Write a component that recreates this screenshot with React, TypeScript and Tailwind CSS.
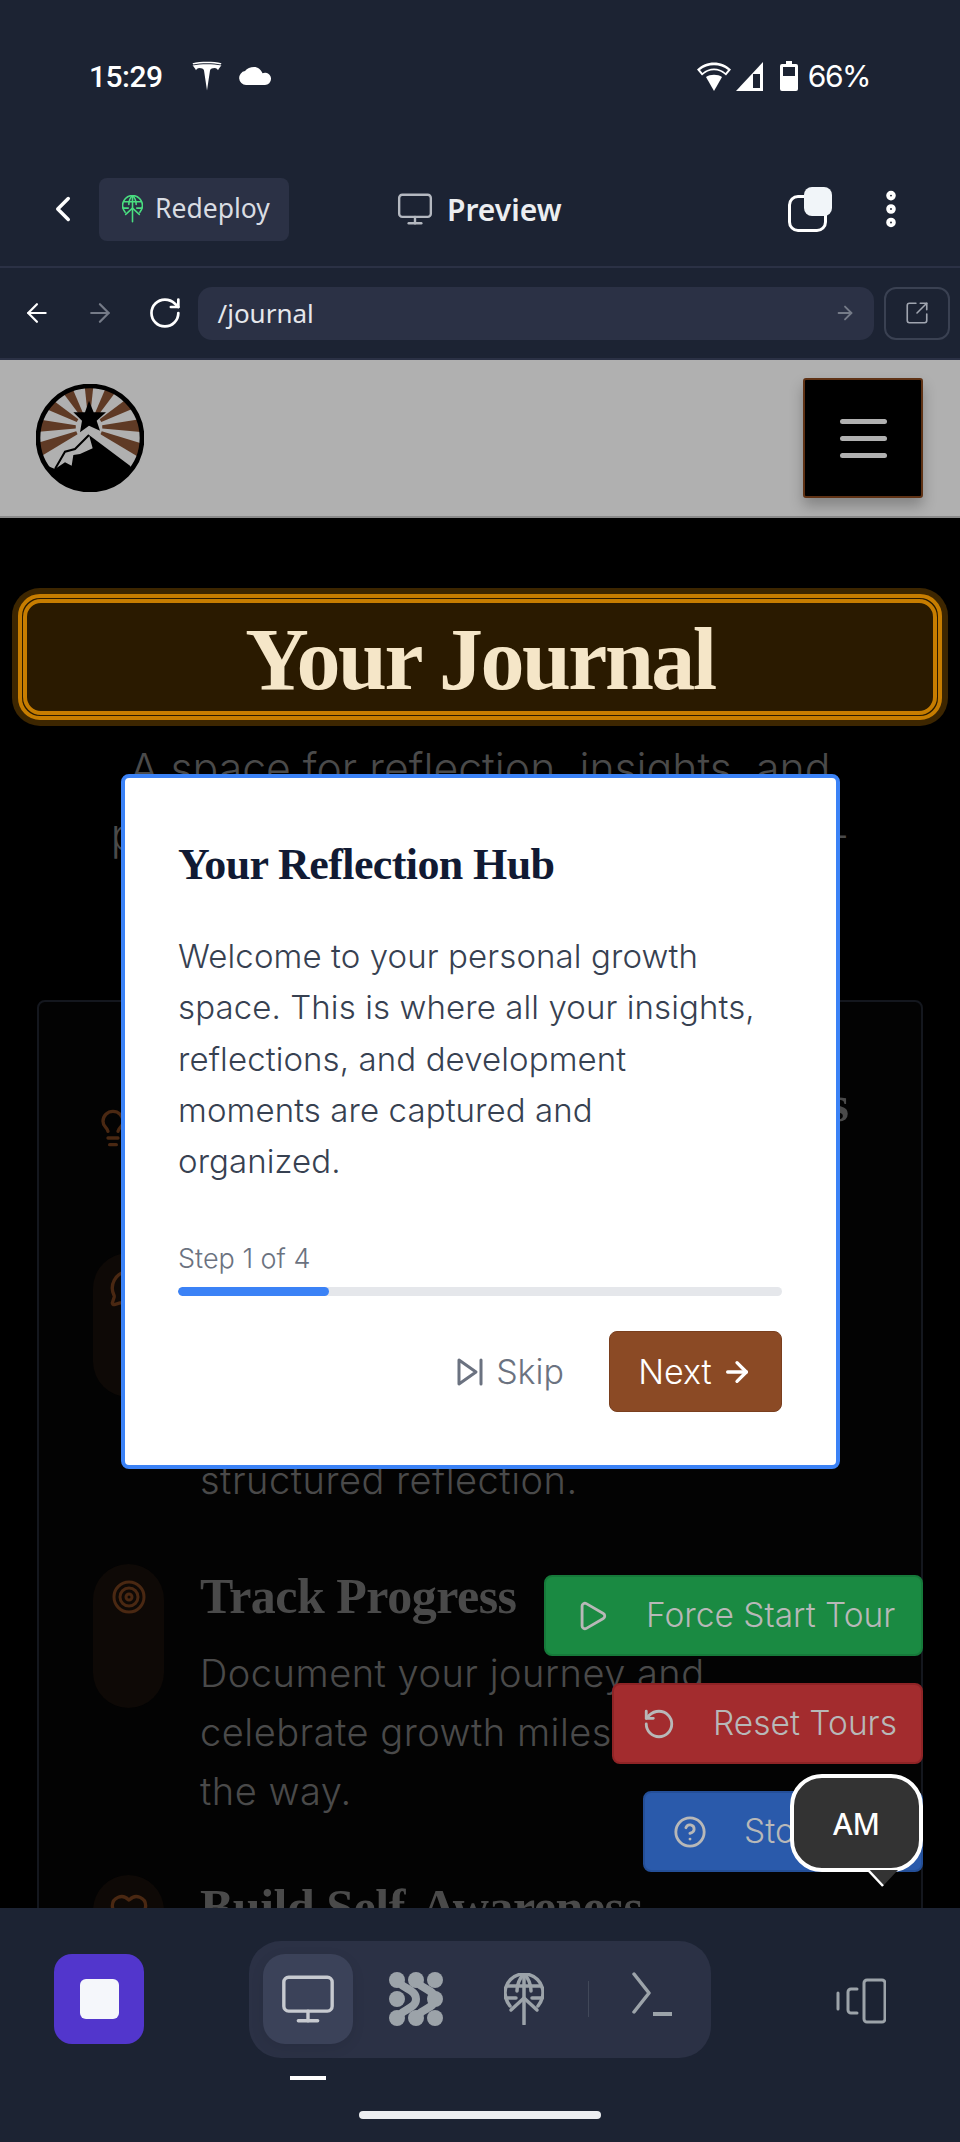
import {
  ArrowLeft,
  ArrowRight,
  ChevronLeft,
  CircleHelp,
  EllipsisVertical,
  Heart,
  Lightbulb,
  MessageCircle,
  Monitor,
  Play,
  RotateCcw,
  RotateCw,
  SquareArrowOutUpRight,
  Target,
} from "lucide-react";

const serif = "font-['Liberation_Serif',serif]";
const body = "font-['Inter',sans-serif]";

function TeslaLogo() {
  return (
    <svg width="30" height="30" viewBox="0 0 30 30" fill="white">
      <path d="M15 29.5 12 9.5c-.2-1.4-1.2-2-3-2.3l-1.5-.2c-2 .3-3 1-3.5 2.2C3 7 1.500 5.500.5 4.500 9 2.700 21 2.700 29.500 4.500 28.500 5.500 27 7 26 9.200c-.5-1.200-1.500-1.900-3.500-2.200L21 7.200c-1.800.3-2.800.9-3 2.300z" />
      <path d="M.5 2.200C9 .3 21 .3 29.500 2.200l-.8 1.200C21 1.800 9 1.800 1.300 3.400z" />
    </svg>
  );
}

function GlobeUp({ size, color, strokeWidth }: { size: number; color: string; strokeWidth: number }) {
  return (
    <svg width={size} height={size * 1.3} viewBox="0 0 40 52" fill="none" stroke={color} strokeWidth={strokeWidth} strokeLinecap="round" strokeLinejoin="round">
      <path d="M6 33C3 29 1 25 1 20 1 9.500 9.500 1 20 1s19 8.500 19 19c0 5-2 9-5 13" />
      <path d="M13 18C13 11 16 5 20 1c4 4 7 10 7 17" />
      <path d="M20 1v50M3 13h34M2 25h10M28 25h10" />
      <path d="M7 37 20 25l13 12" />
    </svg>
  );
}

function NetworkIcon() {
  return (
    <svg width="54" height="54" viewBox="0 0 54 54" fill="#9ca3a9" stroke="#9ca3a9" strokeLinecap="round">
      <circle cx="8" cy="8" r="8" stroke="none" />
      <circle cx="27" cy="8" r="8" stroke="none" />
      <circle cx="46" cy="8" r="8" stroke="none" />
      <circle cx="8" cy="27" r="8" stroke="none" />
      <circle cx="46" cy="27" r="8" stroke="none" />
      <circle cx="8" cy="46" r="8" stroke="none" />
      <circle cx="27" cy="46" r="8" stroke="none" />
      <circle cx="46" cy="46" r="8" stroke="none" />
      <path d="M8 8c5 9 19 9 19 19S13 37 8 46" fill="none" strokeWidth="8" />
      <path d="M27 8c3 9 19 9 19 19S30 37 27 46" fill="none" strokeWidth="8" />
    </svg>
  );
}

function TerminalIcon() {
  return (
    <svg width="42" height="46" viewBox="0 0 42 46" fill="none" stroke="#9ca3a9" strokeWidth="3.500" strokeLinecap="round" strokeLinejoin="round">
      <path d="M2 2l15 19-15 19" />
      <path d="M21 42h19" strokeLinecap="butt" strokeWidth="4" />
    </svg>
  );
}

function DeviceIcon() {
  return (
    <svg width="50" height="46" viewBox="0 0 50 46" fill="none" stroke="#9ca3a9" strokeWidth="3" strokeLinecap="round" strokeLinejoin="round">
      <rect x="28" y="2" width="21" height="42" rx="3" />
      <path d="M21 11h-6a3 3 0 0 0-3 3v18a3 3 0 0 0 3 3h6" />
      <path d="M2 15v16" />
    </svg>
  );
}

function Logo() {
  const cx = 207;
  const cy = 175;
  const rays = [90, 60, 30, 2, -24, 120, 150, 178, 204];
  return (
    <svg width="108" height="108" viewBox="48 45 324 324">
      <defs>
        <clipPath id="logo-clip">
          <circle cx="210" cy="207" r="152" />
        </clipPath>
      </defs>
      <circle cx="210" cy="207" r="152" fill="#b0b0b0" />
      <g clipPath="url(#logo-clip)">
        {rays.map((a) => {
          const w = a === 90 ? 6 : 7;
          const rad = (deg: number) => (deg * Math.PI) / 180;
          const x1 = cx + 40 * Math.cos(rad(a - w));
          const y1 = cy - 40 * Math.sin(rad(a - w));
          const x2 = cx + 40 * Math.cos(rad(a + w));
          const y2 = cy - 40 * Math.sin(rad(a + w));
          const x3 = cx + 260 * Math.cos(rad(a + w));
          const y3 = cy - 260 * Math.sin(rad(a + w));
          const x4 = cx + 260 * Math.cos(rad(a - w));
          const y4 = cy - 260 * Math.sin(rad(a - w));
          return <polygon key={a} points={`${x1},${y1} ${x2},${y2} ${x3},${y3} ${x4},${y4}`} fill="#5f3a25" />;
        })}
        <polygon points="207,170 178,192 88,292 105,300 330,290 240,195" fill="#b0b0b0" />
        <polygon points="207,198 330,290 372,369 48,369 85,292 105,300 135,280 155,290 160,258 180,255 218,238" fill="#000" />
        <path d="M207 198 165 240 135 248 105 300" fill="none" stroke="#000" strokeWidth="6" />
      </g>
      <polygon points="207,95 221,130 258,130 230,155 240,185 207,170 180,190 186,155 160,130 195,130" fill="#000" />
      <circle cx="210" cy="207" r="156" fill="none" stroke="#000" strokeWidth="14" />
    </svg>
  );
}

function JournalItem({ icon, title, lines }: { icon: React.ReactNode; title: string; lines: string[] }) {
  return (
    <div className="flex gap-[36px] items-start">
      <div className="w-[71px] h-[144px] shrink-0 rounded-full bg-[#0e0906] flex justify-center pt-[15px] text-[#4a2812]">{icon}</div>
      <div>
        <h3 className={`${serif} h-[72px] leading-[64px] text-[#4a4a4a] text-[50px] font-bold whitespace-nowrap tracking-[-0.5px]`}>{title}</h3>
        <p className={`${body} mt-[8px] text-[38px] leading-[59px] tracking-[0.5px] font-light text-[#4a4a4a] whitespace-nowrap`}>
          {lines.map((line) => (
            <span key={line} className="block">{line}</span>
          ))}
        </p>
      </div>
    </div>
  );
}

function FloatButton({ icon, label, className }: { icon: React.ReactNode; label: string; className: string }) {
  return (
    <div className={`${className} h-[81px] rounded-[8px] border-2 flex items-center gap-[37px] text-[#b8b8b8]`}>
      {icon}
      <span className={`${body} text-[33.500px] font-light whitespace-nowrap`}>{label}</span>
    </div>
  );
}

export default function App() {
  const intro = [
    "Welcome to your personal growth",
    "space. This is where all your insights,",
    "reflections, and development",
    "moments are captured and",
    "organized.",
  ];

  return (
    <div className="relative w-[960px] h-[2142px] overflow-hidden bg-[#1c2333] flex flex-col text-white">
      {/* status bar */}
      <div className="h-[152px] shrink-0 flex items-center pl-[89px] pr-[90px]">
        <span className="font-['Roboto',sans-serif] text-[30px] font-medium tracking-[-0.5px]">15:29</span>
        <div className="ml-[29px]"><TeslaLogo /></div>
        <svg className="ml-[17px]" width="32" height="18" viewBox="0 0 32 18" fill="white">
          <path d="M7 18a7 7 0 0 1-1-13.900C8 1.500 11.500 0 15 0c4 0 7 2.500 8.500 6.300A6 6 0 0 1 32 12a6 6 0 0 1-6 6z" />
        </svg>
        <div className="flex-1" />
        <svg width="34" height="29" viewBox="0 0 34 29" fill="white">
          <path d="M17 29 9 15c4-3 12-3 16 0z" />
          <path d="M0 7.500C9-2 25-2 34 7.500l-5 6C22 6.500 12 6.500 5 13.500z" fillRule="evenodd" />
          <path d="M3 8C10 1.500 24 1.500 31 8l-2.500 3C22 5 12 5 5.500 11z" fill="#1c2333" />
        </svg>
        <svg className="ml-[5px]" width="27" height="29" viewBox="0 0 27 29">
          <path d="M27 0v29H0z" fill="white" />
          <path d="M17 12h7v14h-7z" fill="#1c2333" />
        </svg>
        <svg className="ml-[17px]" width="18" height="30" viewBox="0 0 18 30">
          <path d="M6 0h6v3h4a2 2 0 0 1 2 2v23a2 2 0 0 1-2 2H2a2 2 0 0 1-2-2V5a2 2 0 0 1 2-2h4z" fill="white" />
          <rect x="3" y="6" width="12" height="9" fill="#1c2333" />
        </svg>
        <span className="ml-[10px] font-['Inter',sans-serif] text-[30px] leading-none tracking-[-1.500px]">66%</span>
      </div>

      {/* builder toolbar */}
      <div className="h-[116px] shrink-0 flex items-center border-b-2 border-[#2b3145] relative">
        <ChevronLeft className="ml-[42px]" size={42} strokeWidth={2} />
        <div className="ml-[15px] h-[63px] w-[190px] rounded-[8px] bg-[#2b3145] flex items-center pl-[23px]">
          <GlobeUp size={21} color="#4ade80" strokeWidth={3} />
          <span className="ml-[12px] font-['Noto_Sans',sans-serif] text-[26.500px] text-[#d9dce2]">Redeploy</span>
        </div>
        <Monitor className="ml-[107px] text-[#b4b8c0]" size={38} strokeWidth={1.500} />
        <span className="ml-[13px] font-['Noto_Sans',sans-serif] text-[30px] font-semibold text-[#eceef1]">Preview</span>
        <div className="flex-1" />
        <div className="relative w-[44px] h-[45px] mr-[36px]">
          <div className="absolute left-0 bottom-0 w-[39px] h-[37px] rounded-[10px] border-[3px] border-white" />
          <div className="absolute right-0 top-0 w-[28px] h-[29px] rounded-[8px] bg-[#f1f5f9]" />
        </div>
        <EllipsisVertical className="mr-[46px]" size={46} strokeWidth={3} />
      </div>

      {/* address bar */}
      <div className="h-[92px] shrink-0 flex items-center border-b-2 border-[#2b3145] pl-[22px] pr-[10px]">
        <ArrowLeft size={30} strokeWidth={1.800} />
        <ArrowRight className="ml-[33px] text-[#757b88]" size={30} strokeWidth={1.800} />
        <RotateCw className="ml-[32px]" size={36} strokeWidth={1.800} />
        <div className="ml-[15px] w-[680px] h-[53px] rounded-[14px] bg-[#2b3145] flex items-center justify-between pl-[20px] pr-[18px]">
          <span className="font-['Noto_Sans',sans-serif] text-[26px] text-[#e5e7eb]">/journal</span>
          <ArrowRight className="text-[#757b88]" size={22} strokeWidth={2} />
        </div>
        <div className="ml-[10px] w-[66px] h-[53px] rounded-[12px] border-2 border-[#3a4152] flex items-center justify-center">
          <SquareArrowOutUpRight className="text-[#a0a5b0]" size={26} strokeWidth={1.500} />
        </div>
      </div>

      {/* page shown in the preview */}
      <div className="relative flex-1 overflow-hidden bg-black">
        <div className="h-[158px] bg-[#b0b0b0] border-b-2 border-[#8a8a8a] flex items-center justify-between pl-[36px] pr-[37px]">
          <Logo />
          <div className="w-[120px] h-[120px] bg-black border-2 border-[#5f3215] rounded-[3px] shadow-[0_8px_14px_rgba(0,0,0,0.25)] flex flex-col items-center justify-center gap-[12px]">
            <div className="w-[47px] h-[5px] rounded-full bg-[#b0b0b0]" />
            <div className="w-[47px] h-[5px] rounded-full bg-[#b0b0b0]" />
            <div className="w-[47px] h-[5px] rounded-full bg-[#b0b0b0]" />
          </div>
        </div>

        <div className="mx-[18px] mt-[76px] h-[126px] rounded-[22px] border-[4px] border-[#c77d00] bg-[#2a1a00] shadow-[0_0_0_6px_#3d2600] p-[1px]">
          <div className="h-full rounded-[18px] border-[4px] border-[#c77d00] flex items-center justify-center pt-[6px]">
            <h1 className={`${serif} text-[88px] leading-none font-bold text-[#f5e6c8] tracking-[-2.500px]`}>Your Journal</h1>
          </div>
        </div>

        <p className={`${body} mt-[16px] text-center text-[42.750px] leading-[66px] font-light text-[#4a4a4a] whitespace-nowrap`}>
          <span className="block">A space for reflection, insights, and</span>
          <span className="block">personal growth on your path of self-</span>
        </p>

        <div className="mx-[37px] mt-[132px] h-[1000px] rounded-[8px] border-2 border-[#14171e] bg-[#030303] px-[54px] pt-[72px]">
          <div className="flex items-start text-[#4a2812]">
            <Lightbulb className="mt-[34px]" size={40} strokeWidth={2} />
            <h2 className={`${serif} flex-1 text-right text-[50px] font-bold text-[#4a4a4a] pr-[18px] leading-[60px]`}>Why Keep Insights</h2>
          </div>
          <div className="mt-[105px] flex flex-col gap-[54px]">
            <JournalItem
              icon={<MessageCircle size={40} strokeWidth={2} />}
              title="Capture Insights"
              lines={["Record your thoughts and", "lessons learned through", "structured reflection."]}
            />
            <JournalItem
              icon={<Target size={36} strokeWidth={2} />}
              title="Track Progress"
              lines={["Document your journey and", "celebrate growth milestones", "the way."]}
            />
            <JournalItem
              icon={<Heart size={40} strokeWidth={2} />}
              title="Build Self-Awareness"
              lines={["Notice patterns in how you"]}
            />
          </div>
        </div>

        {/* tour test buttons */}
        <FloatButton
          className="absolute left-[544px] top-[1215px] w-[379px] bg-[#1a8a42] border-[#167a3a] pl-[29px]"
          icon={<Play size={34} strokeWidth={2} />}
          label="Force Start Tour"
        />
        <FloatButton
          className="absolute left-[612px] top-[1323px] w-[311px] bg-[#a32c2e] border-[#8f2426] pl-[28px]"
          icon={<RotateCcw size={34} strokeWidth={2} />}
          label="Reset Tours"
        />
        <FloatButton
          className="absolute left-[643px] top-[1431px] w-[280px] bg-[#2a5aab] border-[#244f98] pl-[28px]"
          icon={<CircleHelp size={34} strokeWidth={2} />}
          label="Sto"
        />

        <div className="absolute left-[790px] top-[1414px] w-[133px] h-[98px] rounded-[32px] border-[4px] border-white bg-[#333333] flex items-center justify-center">
          <span className="font-['Noto_Sans',sans-serif] text-[30px] font-medium">AM</span>
        </div>
        <svg className="absolute left-[866px] top-[1510px]" width="34" height="18" viewBox="0 0 34 18">
          <polygon points="2,0 32,0 17,16" fill="#333333" />
          <path d="M2 0 17 16" stroke="white" strokeWidth="2.500" />
        </svg>

        {/* tour dialog */}
        <div className="absolute left-[121px] top-[414px] w-[719px] h-[695px] rounded-[8px] border-[4px] border-[#3b82f6] bg-white pl-[53px] pr-[54px] pt-[57px]">
          <h2 className={`${serif} text-[44px] leading-[60px] font-bold text-[#111a33] tracking-[-0.6px]`}>Your Reflection Hub</h2>
          <p className={`${body} mt-[36px] text-[33px] leading-[51.300px] text-[#374151] font-light tracking-[0.1px]`}>
            {intro.map((line) => (
              <span key={line} className="block whitespace-nowrap">{line}</span>
            ))}
          </p>
          <div className={`${body} mt-[54px] text-[27px] leading-[36px] font-light text-[#6b7280]`}>Step 1 of 4</div>
          <div className="mt-[10px] h-[9px] rounded-full bg-[#e5e7eb] overflow-hidden">
            <div className="h-full w-1/4 rounded-full bg-[#3b82f6]" />
          </div>
          <div className="mt-[35px] flex items-center justify-end">
            <svg width="28" height="30" viewBox="0 0 28 30" fill="none" stroke="#6b7280" strokeWidth="3" strokeLinejoin="round" strokeLinecap="round">
              <path d="M3 3l17 12L3 27z" />
              <path d="M25 3v24" />
            </svg>
            <span className={`${body} ml-[12px] text-[34px] font-light text-[#6b7280]`}>Skip</span>
            <div className="ml-[45px] w-[173px] h-[81px] rounded-[8px] border border-[#7a3f1e] bg-[#8b4a25] flex items-center justify-center gap-[9px]">
              <span className={`${body} text-[34px] font-light text-white`}>Next</span>
              <ArrowRight size={32} strokeWidth={2.500} />
            </div>
          </div>
        </div>
      </div>

      {/* bottom dock */}
      <div className="relative h-[234px] shrink-0 bg-[#1c2333]">
        <div className="flex items-start pt-[33px] pl-[54px]">
          <div className="w-[90px] h-[90px] mt-[13px] rounded-[18px] bg-[#5236cc] flex items-center justify-center">
            <div className="w-[39px] h-[40px] rounded-[6px] bg-[#f5f7fb]" />
          </div>
          <div className="ml-[105px] w-[462px] h-[117px] rounded-[32px] bg-[#2b3145] flex items-start pt-[13px] pl-[14px]">
            <div className="w-[90px] h-[90px] rounded-[22px] bg-[#3b4259] flex items-center justify-center shadow-[0_4px_14px_rgba(0,0,0,0.08)]">
              <Monitor className="text-[#c7cad0]" size={58} strokeWidth={1.400} />
            </div>
            <div className="ml-[36px] mt-[18px]"><NetworkIcon /></div>
            <div className="ml-[61px] mt-[19px]"><GlobeUp size={40} color="#9ca3a9" strokeWidth={3.500} /></div>
            <div className="ml-[44px] mt-[27px] w-[1px] h-[36px] bg-[#414859]" />
            <div className="ml-[43px] mt-[18px]"><TerminalIcon /></div>
          </div>
          <div className="ml-[125px] mt-[37px]"><DeviceIcon /></div>
        </div>
        <div className="absolute left-[290px] top-[168px] w-[36px] h-[4px] bg-white" />
        <div className="absolute left-[359px] top-[203px] w-[242px] h-[8px] rounded-full bg-[#eceef1]" />
      </div>
    </div>
  );
}
